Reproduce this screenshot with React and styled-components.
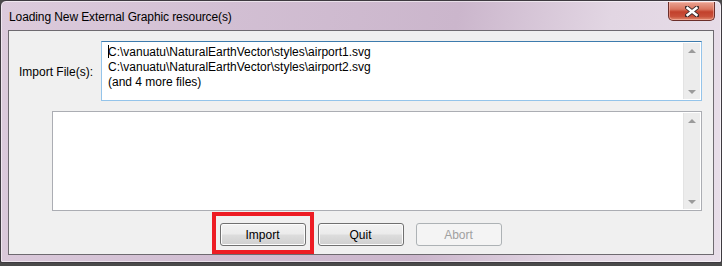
import React from "react"
import styled, { createGlobalStyle } from "styled-components"

const GlobalStyle = createGlobalStyle`
  *, *::before, *::after {
    box-sizing: border-box;
  }
  html, body {
    margin: 0;
    padding: 0;
    background: #4a4a4a;
    font-family: "Liberation Sans", Arial, sans-serif;
    font-size: 12px;
  }
`

const Window = styled.div`
  width: 722px;
  height: 263px;
  border: 1px solid #3e3a40;
  border-radius: 6px 6px 2px 2px;
  background: linear-gradient(
    100deg,
    #dccbdc 0%,
    #d2bfd3 30%,
    #cbb6cc 60%,
    #e2d6e3 80%,
    #e8dee9 100%
  );
  display: flex;
  flex-direction: column;
  box-shadow: inset 0 0 0 1px rgba(255, 255, 255, 0.55);
`

const TitleBar = styled.div`
  height: 29px;
  flex: 0 0 29px;
  display: flex;
  align-items: flex-start;
  justify-content: space-between;
  padding: 0 6px 0 8px;
`

const Title = styled.div`
  padding-top: 9px;
  color: #000;
  font-size: 12px;
  letter-spacing: -0.1px;
`

const CloseButton = styled.div`
  width: 47px;
  height: 19px;
  margin-top: 1px;
  border: 1px solid #6b2e2a;
  border-top: none;
  border-radius: 0 0 5px 5px;
  background: linear-gradient(
    #e9a493 0%,
    #d9755f 40%,
    #c2412c 55%,
    #c8503a 80%,
    #e08a6e 100%
  );
  display: flex;
  align-items: center;
  justify-content: center;
  box-shadow: inset 0 0 0 1px rgba(255, 200, 190, 0.5);
`

const Client = styled.div`
  flex: 1;
  margin: 0 7px 7px 7px;
  border: 1px solid #6e6a70;
  background: #f0f0f0;
  display: flex;
  flex-direction: column;
  padding: 10px 11px 8px 10px;
`

const FileRow = styled.div`
  display: flex;
  align-items: center;
`

const Label = styled.div`
  width: 82px;
  padding-top: 2px;
  color: #000;
`

const TextBox = styled.div`
  flex: ${p => (p.grow ? 1 : "none")};
  height: ${p => p.height}px;
  margin-left: ${p => p.indent || 0}px;
  margin-top: ${p => p.gap || 0}px;
  background: #fff;
  border: 1px solid ${p => (p.focused ? "#94c4ea" : "#abadb3")};
  border-top-color: ${p => (p.focused ? "#3d7bad" : "#abadb3")};
  display: flex;
`

const Lines = styled.div`
  flex: 1;
  padding: 3px 0 0 6px;
  line-height: 15px;
  color: #000;
`

const Line = styled.div`
  white-space: nowrap;
`

const Caret = styled.span`
  display: inline-block;
  width: 1px;
  height: 13px;
  background: #000;
  vertical-align: -2px;
  margin-right: -1px;
`

const ScrollBar = styled.div`
  width: 17px;
  margin: 1px 1px 1px 0;
  background: #ececec;
  border-left: 1px solid #e3e3e3;
  display: flex;
  flex-direction: column;
  justify-content: space-between;
  align-items: center;
  padding: 6px 0 5px;
`

const Arrow = styled.div`
  width: 0;
  height: 0;
  border-left: 4px solid transparent;
  border-right: 4px solid transparent;
  border-${p => (p.down ? "top" : "bottom")}: 4px solid #9a9a9a;
`

const ButtonRow = styled.div`
  margin-top: 12px;
  display: flex;
  justify-content: center;
  gap: 12px;
`

const Button = styled.div`
  position: relative;
  width: 86px;
  height: 23px;
  border: 1px solid ${p => (p.disabled ? "#adb2b5" : "#707070")};
  border-radius: 3px;
  background: ${p =>
    p.disabled
      ? "#f4f4f4"
      : "linear-gradient(#f2f2f2 0%, #ebebeb 48%, #dddddd 52%, #cfcfcf 100%)"};
  box-shadow: inset 0 0 0 1px ${p => (p.disabled ? "#f4f4f4" : "#fcfcfc")};
  display: flex;
  align-items: center;
  justify-content: center;
  color: ${p => (p.disabled ? "#a0a0a0" : "#000")};

  ${p =>
    p.highlighted &&
    `
    &::after {
      content: "";
      position: absolute;
      top: -12px;
      left: -9px;
      right: -9px;
      bottom: -9px;
      border: 4px solid #ed1c24;
    }
  `}
`

const CloseIcon = () => (
  <svg width="14" height="11" viewBox="0 0 14 11">
    <path
      d="M2 1.5 L12 9.5 M12 1.5 L2 9.5"
      stroke="#3a2a2a"
      strokeWidth="4.2"
      strokeLinecap="square"
    />
    <path
      d="M2.5 2 L11.5 9 M11.5 2 L2.5 9"
      stroke="#fff"
      strokeWidth="2.4"
      strokeLinecap="square"
    />
  </svg>
)

const Scroller = () => (
  <ScrollBar>
    <Arrow />
    <Arrow down />
  </ScrollBar>
)

const App = () => {
  return (
    <>
      <GlobalStyle />
      <Window>
        <TitleBar>
          <Title>Loading New External Graphic resource(s)</Title>
          <CloseButton>
            <CloseIcon />
          </CloseButton>
        </TitleBar>
        <Client>
          <FileRow>
            <Label>Import File(s):</Label>
            <TextBox height={60} grow focused>
              <Lines>
                <Line>
                  <Caret />
                  C:\vanuatu\NaturalEarthVector\styles\airport1.svg
                </Line>
                <Line>C:\vanuatu\NaturalEarthVector\styles\airport2.svg</Line>
                <Line>(and 4 more files)</Line>
              </Lines>
              <Scroller />
            </TextBox>
          </FileRow>
          <TextBox height={100} indent={33} gap={10}>
            <Lines />
            <Scroller />
          </TextBox>
          <ButtonRow>
            <Button highlighted>Import</Button>
            <Button>Quit</Button>
            <Button disabled>Abort</Button>
          </ButtonRow>
        </Client>
      </Window>
    </>
  )
}

export default App
